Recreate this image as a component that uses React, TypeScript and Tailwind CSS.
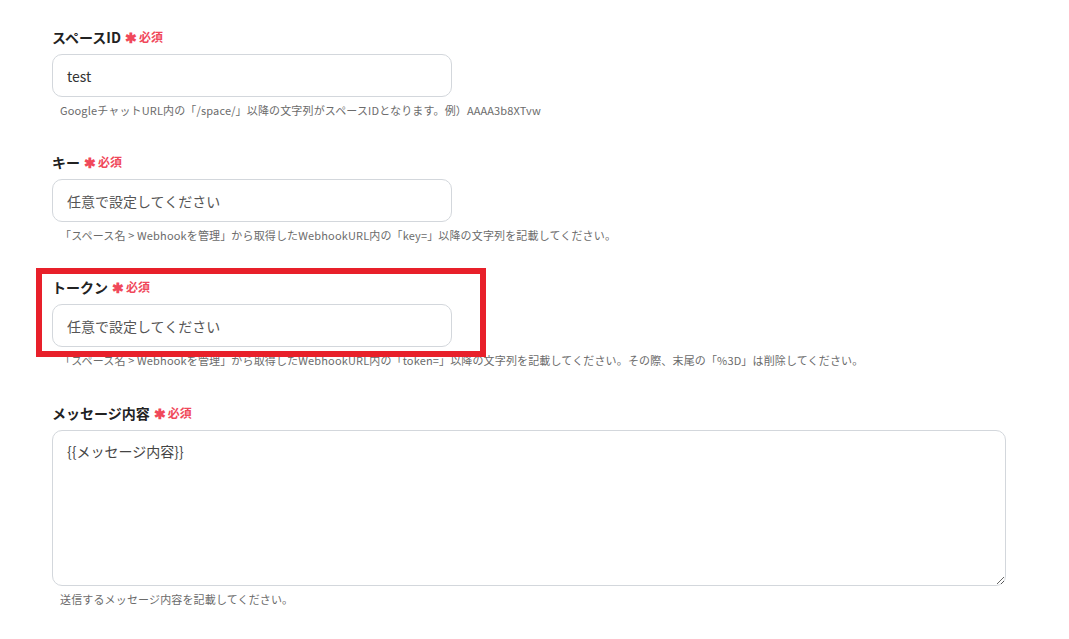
import React from "react";

const font = { fontFamily: '"Noto Sans CJK JP", "Noto Sans", sans-serif' };

function Label({ text }: { text: string }) {
  return (
    <div className="flex h-5 items-center gap-1 leading-5">
      <span className="text-[14px] font-bold text-[#222]">{text}</span>
      <span className="flex items-center text-[12px] font-bold text-[#f0485a]">
        <span className="mr-[2px] text-[14px]">✱</span>必須
      </span>
    </div>
  );
}

function Help({ text, className = "" }: { text: string; className?: string }) {
  return (
    <p className={`pl-2 text-[11px] leading-4 tracking-[0.15px] text-[#6b6b6b] ${className}`}>
      {text}
    </p>
  );
}

function Field({
  label,
  value,
  placeholder,
  help,
}: {
  label: string;
  value?: string;
  placeholder?: string;
  help: string;
}) {
  return (
    <div className="flex flex-col">
      <Label text={label} />
      <input
        className="mt-[7px] h-[43px] w-[400px] rounded-[10px] border border-[#d3d7dc] bg-white px-[14px] text-[14px] text-[#333] outline-none placeholder:text-[#555]"
        defaultValue={value}
        placeholder={placeholder}
        style={font}
      />
      <Help text={help} className="mt-[5px]" />
    </div>
  );
}

export default function App() {
  return (
    <div className="relative min-h-[639px] w-[1069px] bg-white pt-[27px] pl-[52px]" style={font}>
      <div className="flex flex-col gap-[34px]">
        <Field
          label="スペースID"
          value="test"
          help="GoogleチャットURL内の「/space/」以降の文字列がスペースIDとなります。例）AAAA3b8XTvw"
        />
        <Field
          label="キー"
          placeholder="任意で設定してください"
          help="「スペース名 > Webhookを管理」から取得したWebhookURL内の「key=」以降の文字列を記載してください。"
        />
        <Field
          label="トークン"
          placeholder="任意で設定してください"
          help="「スペース名 > Webhookを管理」から取得したWebhookURL内の「token=」以降の文字列を記載してください。その際、末尾の「%3D」は削除してください。"
        />
        <div className="mt-[1px] flex flex-col">
          <Label text="メッセージ内容" />
          <textarea
            className="mt-[7px] h-[156px] w-[954px] rounded-[10px] border border-[#d3d7dc] bg-white px-[14px] py-[10px] text-[14px] text-[#444] outline-none"
            defaultValue="{{メッセージ内容}}"
            style={font}
          />
          <Help text="送信するメッセージ内容を記載してください。" className="mt-[5px]" />
        </div>
      </div>
      <div className="pointer-events-none absolute left-[36px] top-[268px] h-[89px] w-[450px] border-[6px] border-[#e8202a]" />
    </div>
  );
}
